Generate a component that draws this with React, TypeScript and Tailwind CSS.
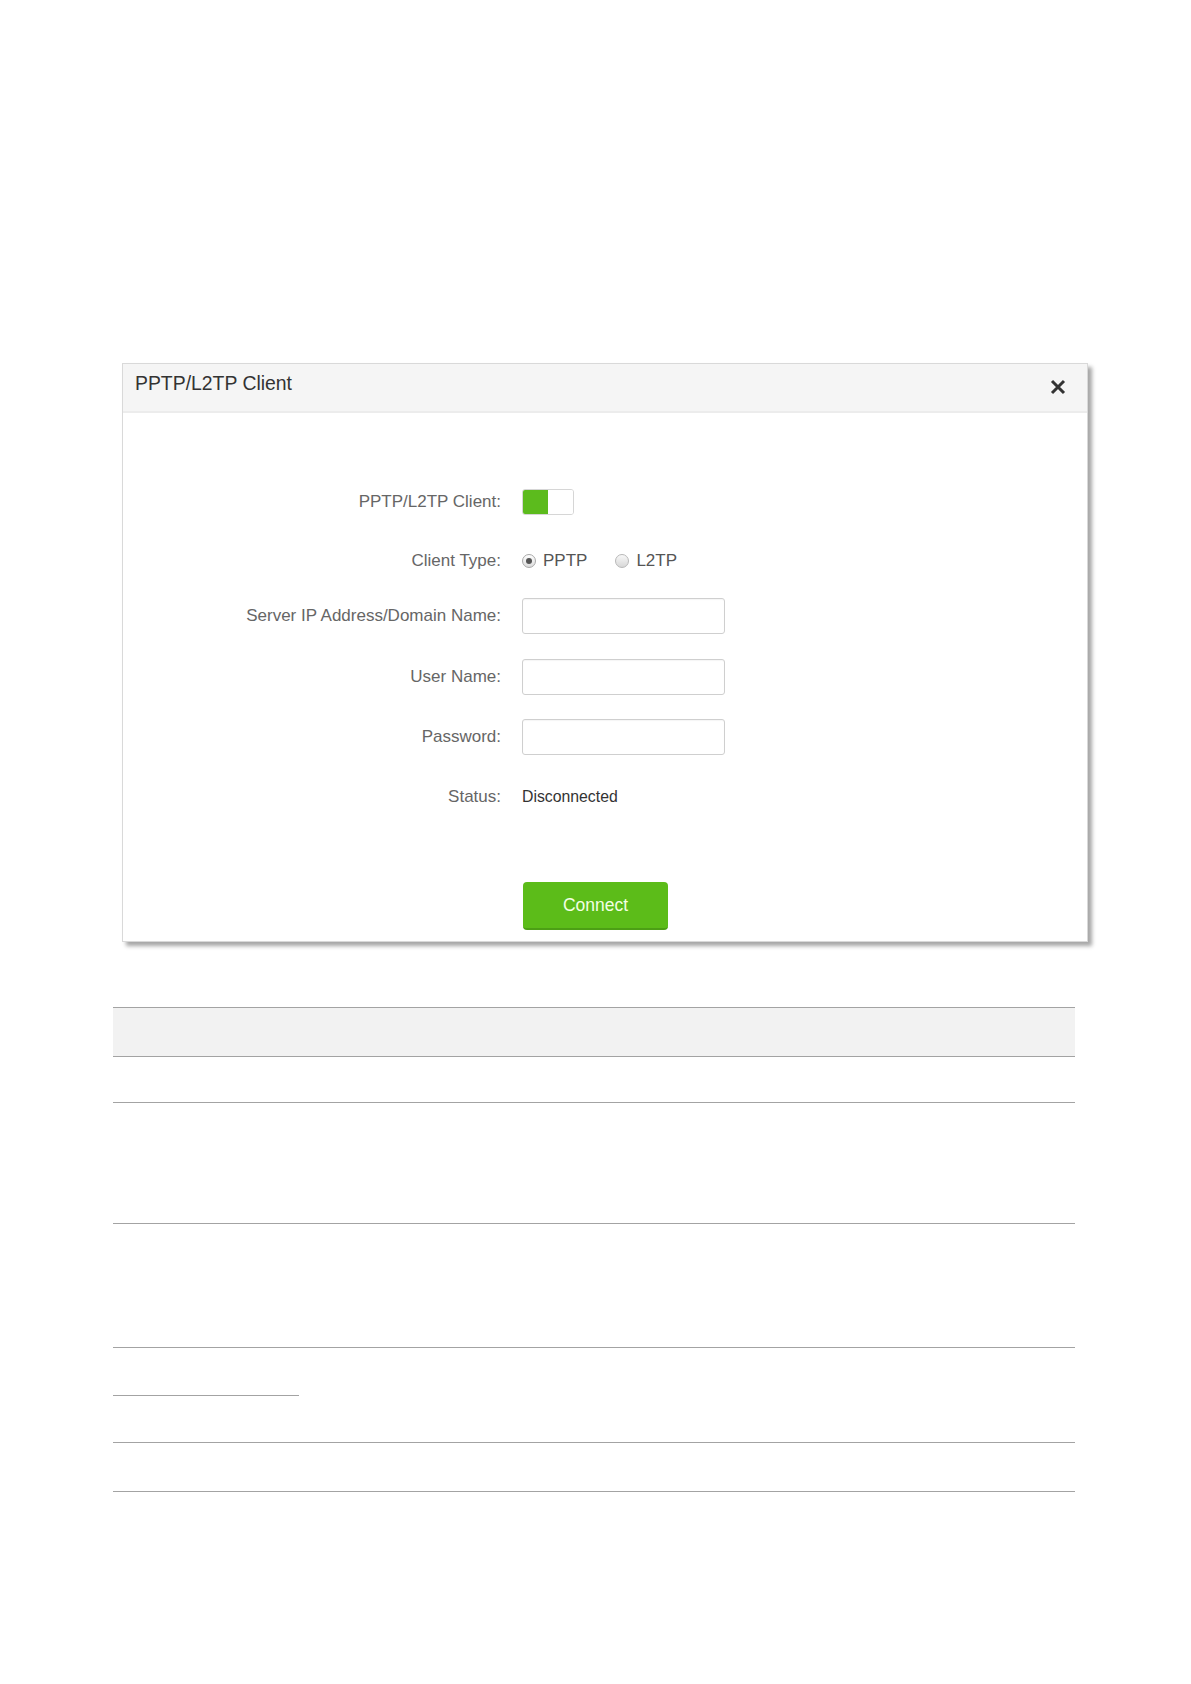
export default function App() {
  const labelCls = "w-[378px] text-right text-[17px] text-[#666]";

  return (
    <div className="min-h-[1684px] w-full bg-white font-['Liberation_Sans',Arial,sans-serif]">
      <div className="pt-[363px] pl-[122px]">
        {/* modal */}
        <div className="w-[966px] border border-[#d9d9d9] bg-white shadow-[4px_4px_4px_rgba(0,0,0,0.35)]">
          <div className="flex h-[49px] items-start justify-between border-b-2 border-[#ececec] bg-[#f5f5f5] pl-[12px] pr-[21px] pt-[8px]">
            <div className="text-[19.4px] leading-[22px] text-[#333]">PPTP/L2TP Client</div>
            <svg width="16" height="16" viewBox="0 0 16 16" className="mt-[7px]">
              <path d="M2 2 L14 14 M14 2 L2 14" stroke="#333" strokeWidth="3" strokeLinecap="butt" />
            </svg>
          </div>

          <div className="flex flex-col pt-[67px] pb-[11px]">
            <div className="flex h-[43px] items-center">
              <div className={labelCls}>PPTP/L2TP Client:</div>
              <div className="ml-[21px] flex h-[26px] w-[52px] overflow-hidden rounded-[3px] border border-[#d6d6d6]">
                <div className="w-[25px] bg-[#5cbb1d]" />
                <div className="flex-1 bg-white" />
              </div>
            </div>

            <div className="mt-[18px] flex h-[40px] items-center">
              <div className={labelCls}>Client Type:</div>
              <div className="ml-[21px] flex items-center text-[17px] text-[#555]">
                <span className="flex h-[14px] w-[14px] items-center justify-center rounded-full border border-[#a8a8a8] bg-gradient-to-b from-white to-[#dcdcdc]">
                  <span className="h-[6px] w-[6px] rounded-full bg-[#555]" />
                </span>
                <span className="ml-[7px]">PPTP</span>
                <span className="ml-[28px] h-[14px] w-[14px] rounded-full border border-[#b8b8b8] bg-gradient-to-b from-[#f8f8f8] to-[#d8d8d8]" />
                <span className="ml-[7px]">L2TP</span>
              </div>
            </div>

            <div className="mt-[17px] flex h-[36px] items-center">
              <div className={labelCls}>Server IP Address/Domain Name:</div>
              <div className="ml-[21px] h-[36px] w-[203px] rounded-[3px] border border-[#cfcfcf] bg-white shadow-[inset_0_1px_1px_rgba(0,0,0,0.04)]" />
            </div>

            <div className="mt-[25px] flex h-[36px] items-center">
              <div className={labelCls}>User Name:</div>
              <div className="ml-[21px] h-[36px] w-[203px] rounded-[3px] border border-[#cfcfcf] bg-white shadow-[inset_0_1px_1px_rgba(0,0,0,0.04)]" />
            </div>

            <div className="mt-[24px] flex h-[36px] items-center">
              <div className={labelCls}>Password:</div>
              <div className="ml-[21px] h-[36px] w-[203px] rounded-[3px] border border-[#cfcfcf] bg-white shadow-[inset_0_1px_1px_rgba(0,0,0,0.04)]" />
            </div>

            <div className="mt-[24px] flex h-[36px] items-center">
              <div className={labelCls}>Status:</div>
              <div className="ml-[21px] text-[15.8px] text-[#333]">Disconnected</div>
            </div>

            <div className="mt-[67px] flex">
              <div className="w-[378px]" />
              <button className="ml-[22px] flex h-[48px] w-[145px] items-center justify-center rounded-[4px] border-b-2 border-[#4c9f15] bg-[#5cbc19] text-[17.5px] text-[#f3ffe4]">
                Connect
              </button>
            </div>
          </div>
        </div>
      </div>

      {/* table below */}
      <div className="ml-[113px] mt-[65px] w-[962px]">
        <div className="h-[50px] border-y border-[#a3a3a3] bg-[#f2f2f2]" />
        <div className="h-[46px] border-b border-[#a3a3a3]" />
        <div className="h-[121px] border-b border-[#a3a3a3]" />
        <div className="h-[124px] border-b border-[#a3a3a3]" />
        <div className="flex h-[95px] flex-col border-b border-[#a3a3a3]">
          <div className="h-[48px] w-[186px] border-b border-[#a3a3a3]" />
        </div>
        <div className="h-[49px] border-b border-[#a3a3a3]" />
      </div>
    </div>
  );
}
